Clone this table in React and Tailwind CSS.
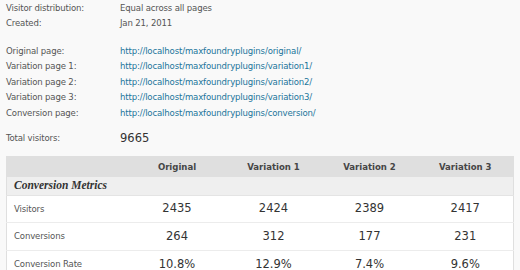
import React from "react";

const info = [
  ["Visitor distribution:", "Equal across all pages"],
  ["Created:", "Jan 21, 2011"],
];

const pages = [
  ["Original page:", "http://localhost/maxfoundryplugins/original/"],
  ["Variation page 1:", "http://localhost/maxfoundryplugins/variation1/"],
  ["Variation page 2:", "http://localhost/maxfoundryplugins/variation2/"],
  ["Variation page 3:", "http://localhost/maxfoundryplugins/variation3/"],
  ["Conversion page:", "http://localhost/maxfoundryplugins/conversion/"],
];

const rows = [
  { label: "Visitors", values: ["2435", "2424", "2389", "2417"], h: "h-[27px]" },
  { label: "Conversions", values: ["264", "312", "177", "231"], h: "h-[28px]" },
  { label: "Conversion Rate", values: ["10.8%", "12.9%", "7.4%", "9.6%"], h: "h-[28px]" },
];

const InfoRow = ({ label, children, className = "" }) => (
  <div className={`flex h-[15.5px] items-center ${className}`}>
    <div className="w-[114px] shrink-0 text-[#555]">{label}</div>
    <div>{children}</div>
  </div>
);

export default function App() {
  return (
    <div className="w-[520px] h-[270px] overflow-hidden bg-[#f9f9f9] font-['DejaVu_Sans_Condensed','DejaVu_Sans',sans-serif] text-[9.5px] tracking-[-0.15px] text-[#555]">
      <div className="pl-[6px]">
        {info.map(([l, v]) => (
          <InfoRow key={l} label={l}>
            <span className="text-[#555]">{v}</span>
          </InfoRow>
        ))}
        <div className="h-[12px]" />
        {pages.map(([l, v]) => (
          <InfoRow key={l} label={l}>
            <a href="#" className="text-[#21759b]">{v}</a>
          </InfoRow>
        ))}
        <div className="h-[10px]" />
        <InfoRow label="Total visitors:">
          <span className="font-['DejaVu_Sans',sans-serif] text-[11.5px] tracking-normal text-[#333]">9665</span>
        </InfoRow>
      </div>

      <table className="mt-[10px] ml-[6px] w-[508px] border-collapse border border-[#dfdfdf] table-fixed">
        <colgroup>
          <col className="w-[122px]" />
          <col className="w-[97px]" />
          <col className="w-[96px]" />
          <col className="w-[96px]" />
          <col />
        </colgroup>
        <thead>
          <tr className="h-[20px] bg-[#dfdfdf]">
            <th />
            {["Original", "Variation 1", "Variation 2", "Variation 3"].map((h) => (
              <th key={h} className="text-center font-bold text-[9.5px] tracking-normal text-[#464646]">
                {h}
              </th>
            ))}
          </tr>
        </thead>
        <tbody>
          <tr className="h-[19px] bg-[#efefef] border-b border-[#e4e4e4]">
            <td colSpan={5} className="pl-[7px] font-['Liberation_Serif',serif] italic font-bold text-[11.5px] tracking-normal text-[#333]">
              Conversion Metrics
            </td>
          </tr>
          {rows.map((r) => (
            <tr key={r.label} className={`${r.h} bg-white border-b border-[#ececec]`}>
              <td className="pl-[7px] text-[#555]">{r.label}</td>
              {r.values.map((v, i) => (
                <td key={i} className="text-center font-['DejaVu_Sans',sans-serif] text-[11.5px] tracking-normal text-[#333]">
                  {v}
                </td>
              ))}
            </tr>
          ))}
        </tbody>
      </table>
    </div>
  );
}
